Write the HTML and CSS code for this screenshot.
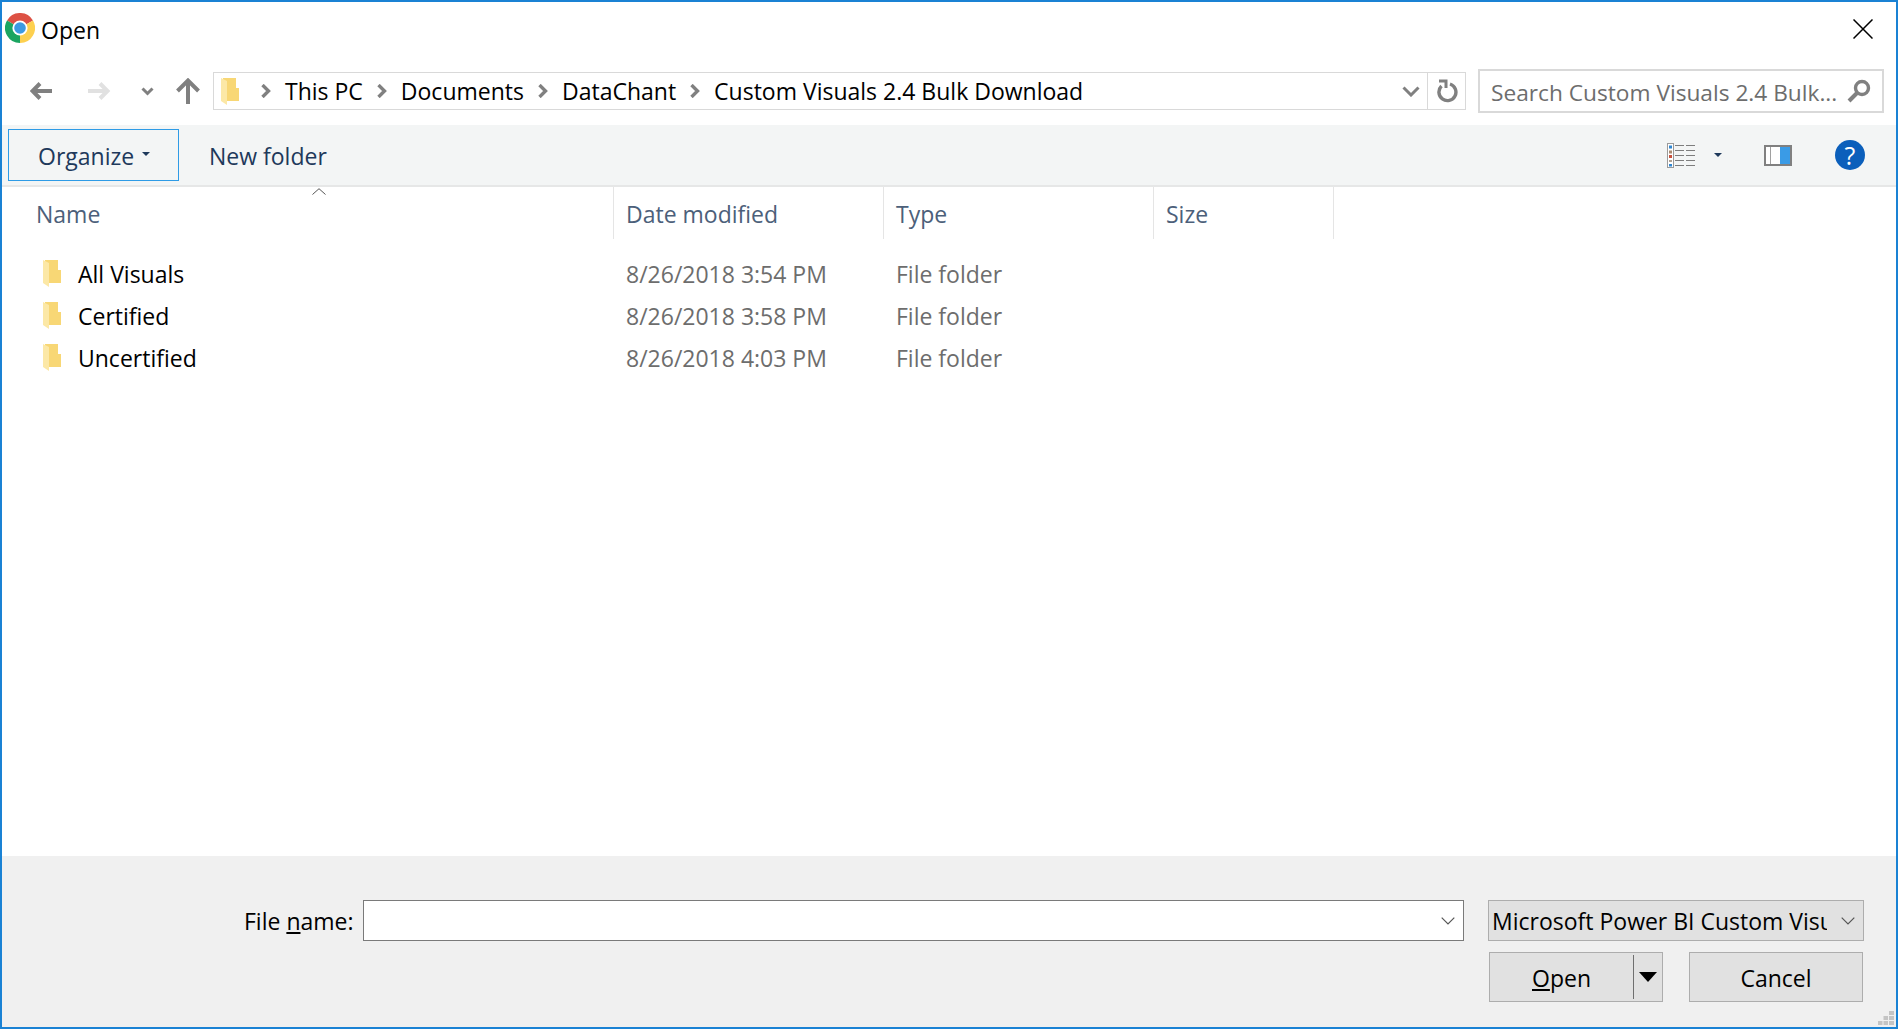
FILE: index.html
```html
<!DOCTYPE html>
<html lang="en">
<head>
    <meta charset="UTF-8">
    <title>Open</title>
    <link rel="stylesheet" href="styles.css">
</head>
<body>
    <div class="dialog">
        <div class="titlebar">
            <svg class="app-icon" width="30" height="30" viewBox="0 0 30 30">
                <path d="M15 15 L2 7.5 A15 15 0 0 1 28 7.5 Z" fill="#dd5144"/>
                <path d="M15 15 L28 7.5 A15 15 0 0 1 15 30 Z" fill="#fdd04f"/>
                <path d="M15 15 L15 30 A15 15 0 0 1 2 7.5 Z" fill="#1ba561"/>
                <circle cx="15" cy="15" r="7.6" fill="#fff"/>
                <circle cx="15" cy="15" r="5.8" fill="#3c9ae2"/>
            </svg>
            <span class="title">Open</span>
            <svg class="close" width="20" height="20" viewBox="0 0 20 20">
                <path d="M0.5 0.5 L19.5 19.5 M19.5 0.5 L0.5 19.5" stroke="#000" stroke-width="1.5" fill="none"/>
            </svg>
        </div>

        <div class="navbar">
            <div class="nav-buttons">
                <svg class="nav-back" width="23" height="18" viewBox="0 0 23 18">
                    <path d="M22 9 H3 M10 1.5 L2.5 9 L10 16.5" stroke="#808080" stroke-width="4" fill="none"/>
                </svg>
                <svg class="nav-forward" width="23" height="18" viewBox="0 0 23 18">
                    <path d="M0 9 H19 M12 1.5 L19.5 9 L12 16.5" stroke="#e1e1e1" stroke-width="4" fill="none"/>
                </svg>
                <svg class="nav-recent" width="13" height="9" viewBox="0 0 13 9">
                    <path d="M1.5 1.5 L6.5 6.5 L11.5 1.5" stroke="#808080" stroke-width="3" fill="none"/>
                </svg>
                <svg class="nav-up" width="24" height="26" viewBox="0 0 24 26">
                    <path d="M12 26 V3 M1.5 13 L12 2.5 L22.5 13" stroke="#808080" stroke-width="4" fill="none"/>
                </svg>
            </div>
            <div class="address">
                <svg class="crumb-folder" width="18" height="27" viewBox="0 0 18 27">
                    <path d="M2 0 H15 V10 H18 V23 H2 Z" fill="#f8d775"/>
                    <path d="M0 0 L6 3 V27 L0 23 Z" fill="#fce8a6"/>
                </svg>
                <svg class="crumb-sep crumb-sep-first" width="10" height="14" viewBox="0 0 10 14"><path d="M1.5 1 L7.500 7 L1.5 13" stroke="#808080" stroke-width="3.4" fill="none"/></svg>
                <span class="crumb">This PC</span>
                <svg class="crumb-sep" width="10" height="14" viewBox="0 0 10 14"><path d="M1.5 1 L7.500 7 L1.5 13" stroke="#808080" stroke-width="3.4" fill="none"/></svg>
                <span class="crumb">Documents</span>
                <svg class="crumb-sep" width="10" height="14" viewBox="0 0 10 14"><path d="M1.5 1 L7.500 7 L1.5 13" stroke="#808080" stroke-width="3.4" fill="none"/></svg>
                <span class="crumb">DataChant</span>
                <svg class="crumb-sep" width="10" height="14" viewBox="0 0 10 14"><path d="M1.5 1 L7.500 7 L1.5 13" stroke="#808080" stroke-width="3.4" fill="none"/></svg>
                <span class="crumb">Custom Visuals 2.4 Bulk Download</span>
                <svg class="address-drop" width="18" height="11" viewBox="0 0 18 11">
                    <path d="M1.5 1.5 L9 9 L16.5 1.5" stroke="#808080" stroke-width="3" fill="none"/>
                </svg>
                <div class="refresh">
                    <svg width="22" height="24" viewBox="0 0 22 24">
                        <path d="M14 5 A8.500 8.500 0 1 1 5.500 7" stroke="#808080" stroke-width="3.400" fill="none"/>
                        <path d="M3 2 L10 2 L10 9" stroke="#808080" stroke-width="3" fill="none"/>
                    </svg>
                </div>
            </div>
            <div class="search">
                <span class="search-text">Search Custom Visuals 2.4 Bulk...</span>
                <svg width="24" height="24" viewBox="0 0 24 24">
                    <circle cx="15" cy="9" r="6.5" stroke="#808080" stroke-width="3.4" fill="none"/>
                    <path d="M10 14 L2 22" stroke="#808080" stroke-width="4" fill="none"/>
                </svg>
            </div>
        </div>

        <div class="toolbar">
            <div class="organize">
                <span>Organize</span>
                <span class="caret"></span>
            </div>
            <span class="new-folder">New folder</span>
            <div class="tool-icons">
                <svg class="view-icon" width="28" height="25" viewBox="0 0 28 25">
                    <rect x="0.5" y="0.5" width="6" height="24" fill="#fff" stroke="#9a9a9a"/>
                    <rect x="2" y="2.5" width="3" height="3" fill="#2f86d0"/>
                    <rect x="2" y="7.5" width="3" height="3" fill="#a88a70"/>
                    <rect x="2" y="12" width="3" height="3" fill="#c8503c"/>
                    <rect x="2" y="17" width="3" height="2" fill="#b0a090"/>
                    <rect x="2" y="21" width="3" height="2.5" fill="#2f86d0"/>
                    <path d="M8 2.5 H17 M19 2.5 H28 M8 7.5 H17 M19 7.5 H28 M8 12.5 H17 M19 12.5 H28 M8 17.5 H17 M19 17.5 H28 M8 22.5 H17 M19 22.5 H28" stroke="#7d7d7d" stroke-width="1"/>
                </svg>
                <span class="caret view-caret"></span>
                <svg class="pane-icon" width="28" height="21" viewBox="0 0 28 21">
                    <rect x="1" y="1" width="26" height="19" fill="#fff" stroke="#808080" stroke-width="2"/>
                    <rect x="16" y="2" width="10" height="17" fill="#3a9be6"/>
                    <path d="M6.5 2 V19" stroke="#a0a0a0"/>
                </svg>
                <div class="help-icon">?</div>
            </div>
        </div>

        <div class="files">
            <svg class="sort-mark" width="14" height="7" viewBox="0 0 14 7">
                <path d="M0.5 6.5 L7 0.7 L13.5 6.5" stroke="#555" stroke-width="1" fill="none"/>
            </svg>
            <div class="head">
                <div class="head-cell head-name">Name</div>
                <div class="head-cell">Date modified</div>
                <div class="head-cell">Type</div>
                <div class="head-cell">Size</div>
            </div>
            <div class="rows">
                <div class="row">
                    <div class="cell-name">
                        <svg width="18" height="27" viewBox="0 0 18 27"><path d="M2 0 H15 V10 H18 V23 H2 Z" fill="#f8d775"/><path d="M0 0 L6 3 V27 L0 23 Z" fill="#fce8a6"/></svg>
                        <span>All Visuals</span>
                    </div>
                    <div class="cell-meta">8/26/2018 3:54 PM</div>
                    <div class="cell-meta">File folder</div>
                </div>
                <div class="row">
                    <div class="cell-name">
                        <svg width="18" height="27" viewBox="0 0 18 27"><path d="M2 0 H15 V10 H18 V23 H2 Z" fill="#f8d775"/><path d="M0 0 L6 3 V27 L0 23 Z" fill="#fce8a6"/></svg>
                        <span>Certified</span>
                    </div>
                    <div class="cell-meta">8/26/2018 3:58 PM</div>
                    <div class="cell-meta">File folder</div>
                </div>
                <div class="row">
                    <div class="cell-name">
                        <svg width="18" height="27" viewBox="0 0 18 27"><path d="M2 0 H15 V10 H18 V23 H2 Z" fill="#f8d775"/><path d="M0 0 L6 3 V27 L0 23 Z" fill="#fce8a6"/></svg>
                        <span>Uncertified</span>
                    </div>
                    <div class="cell-meta">8/26/2018 4:03 PM</div>
                    <div class="cell-meta">File folder</div>
                </div>
            </div>
        </div>

        <div class="footer">
            <div class="footer-row">
                <label class="file-label">File <u>n</u>ame:</label>
                <div class="file-input">
                    <svg width="14" height="8" viewBox="0 0 14 8"><path d="M0.7 0.7 L7 7 L13.3 0.7" stroke="#555" stroke-width="1.2" fill="none"/></svg>
                </div>
                <div class="file-type">
                    <span class="file-type-text">Microsoft Power BI Custom Visuals</span>
                    <svg width="14" height="8" viewBox="0 0 14 8"><path d="M0.7 0.7 L7 7 L13.3 0.7" stroke="#555" stroke-width="1.2" fill="none"/></svg>
                </div>
            </div>
            <div class="footer-actions">
                <div class="btn btn-open">
                    <span class="btn-open-label"><u>O</u>pen</span>
                    <span class="btn-split"></span>
                    <span class="btn-arrow"></span>
                </div>
                <div class="btn btn-cancel">Cancel</div>
            </div>
            <svg class="grip" width="16" height="14" viewBox="0 0 16 14">
                <path d="M11 0 H16 V4 H11 Z M5.500 5 H10 V9 H5.500 Z M11 5 H16 V9 H11 Z M0 10 H4.500 V14 H0 Z M5.500 10 H10 V14 H5.500 Z M11 10 H16 V14 H11 Z" fill="#c4c4c4"/>
            </svg>
        </div>
    </div>
</body>
</html>
```

FILE: styles.css
```css
html, body {
    margin: 0;
    padding: 0;
    height: 100%;
}
body {
    font-family: "Open Sans", "Noto Sans", sans-serif;
    font-size: 23px;
    color: #000;
    background: #fff;
    overflow: hidden;
}
svg {
    display: block;
    flex: none;
}
.dialog {
    display: flex;
    flex-direction: column;
    box-sizing: border-box;
    height: 1029px;
    border: 2px solid #1a82d4;
    background: #fff;
}

/* title bar */
.titlebar {
    display: flex;
    align-items: center;
    height: 55px;
    padding: 0 23px 3px 3px;
    box-sizing: border-box;
}
.title {
    margin-left: 6px;
    margin-top: 3px;
    flex: 1;
}
.close {
    margin-top: 2px;
}

/* nav row */
.navbar {
    display: flex;
    align-items: flex-start;
    height: 68px;
    padding-top: 15px;
    box-sizing: border-box;
}
.nav-buttons {
    display: flex;
    align-items: center;
    width: 211px;
    height: 38px;
    padding-left: 28px;
    box-sizing: border-box;
}
.nav-forward {
    margin-left: 35px;
}
.nav-recent {
    margin-left: 30px;
}
.nav-up {
    margin-left: 22px;
}
.address {
    display: flex;
    align-items: center;
    width: 1253px;
    height: 38px;
    box-sizing: border-box;
    border: 1px solid #d9d9d9;
    padding-left: 7px;
}
.crumb {
    white-space: nowrap;
}
.crumb-sep {
    margin: 0 14px 0 14px;
}
.crumb-sep-first {
    margin-left: 22px;
}
.address-drop {
    margin-left: auto;
    margin-right: 7px;
}
.refresh {
    display: flex;
    align-items: center;
    justify-content: center;
    width: 38px;
    height: 100%;
    border-left: 1px solid #d9d9d9;
    box-sizing: border-box;
}
.search {
    display: flex;
    align-items: center;
    justify-content: space-between;
    width: 406px;
    height: 44px;
    margin: -3px 0 0 12px;
    padding: 0 11px 0 11px;
    box-sizing: border-box;
    border: 2px solid #d9d9d9;
    color: #6d6d6d;
}
.search-text {
    font-size: 22.7px;
    margin-top: 2px;
    white-space: nowrap;
}

/* toolbar */
.toolbar {
    display: flex;
    align-items: center;
    height: 62px;
    padding: 0 31px 0 6px;
    box-sizing: border-box;
    background: #f3f5f5;
    border-bottom: 2px solid #e6e7e7;
    color: #1e395b;
}
.organize {
    display: flex;
    align-items: center;
    width: 171px;
    height: 52px;
    box-sizing: border-box;
    padding-left: 29px;
    padding-top: 2px;
    border: 1px solid #2e9be6;
}
.caret {
    width: 0;
    height: 0;
    margin-left: 8px;
    margin-bottom: 5px;
    border-left: 4px solid transparent;
    border-right: 4px solid transparent;
    border-top: 4px solid #1e395b;
}
.new-folder {
    margin-left: 30px;
    margin-top: 2px;
}
.tool-icons {
    display: flex;
    align-items: center;
    margin-left: auto;
}
.view-caret {
    margin: 0 0 0 19px;
}
.pane-icon {
    margin-left: 42px;
}
.help-icon {
    width: 30px;
    height: 30px;
    margin-left: 43px;
    border-radius: 50%;
    background: #0b5fbb;
    color: #fff;
    font-size: 25px;
    line-height: 30px;
    text-align: center;
}

/* file list */
.files {
    position: relative;
    flex: 1;
}
.sort-mark {
    position: absolute;
    left: 310px;
    top: 1px;
}
.head {
    display: grid;
    grid-template-columns: 612px 270px 270px 180px;
    width: max-content;
    height: 52px;
    color: #4c607a;
}
.head-cell {
    display: flex;
    align-items: center;
    padding-left: 12px;
    padding-top: 2px;
    border-right: 1px solid #e5e5e5;
    box-sizing: border-box;
}
.head-name {
    padding-left: 34px;
}
.rows {
    padding-top: 14px;
}
.row {
    display: grid;
    grid-template-columns: 612px 270px 270px;
    align-items: center;
    height: 42px;
}
.cell-name {
    display: flex;
    align-items: center;
    gap: 17px;
    padding-left: 41px;
}
.cell-name svg {
    margin-bottom: 2px;
}
.cell-meta {
    padding-left: 12px;
    color: #6d6d6d;
}

/* footer */
.footer {
    position: relative;
    height: 171px;
    box-sizing: border-box;
    padding-top: 44px;
    background: #f0f0f0;
}
.footer-row {
    display: flex;
    align-items: center;
    height: 41px;
    padding-left: 242px;
}
.file-label {
    width: 119px;
}
.file-input {
    display: flex;
    align-items: center;
    justify-content: flex-end;
    width: 1101px;
    height: 41px;
    box-sizing: border-box;
    border: 1px solid #7a7a7a;
    background: #fff;
    padding-right: 8px;
}
.file-type {
    display: flex;
    align-items: center;
    justify-content: space-between;
    width: 376px;
    height: 41px;
    margin-left: 24px;
    box-sizing: border-box;
    border: 1px solid #adadad;
    background: #e1e1e1;
    padding: 0 8px 0 3px;
}
.file-type-text {
    width: 335px;
    overflow: hidden;
    white-space: nowrap;
}
.footer-actions {
    display: flex;
    justify-content: flex-end;
    gap: 26px;
    margin-top: 11px;
    padding-right: 33px;
}
.btn {
    display: flex;
    align-items: center;
    justify-content: center;
    width: 174px;
    height: 50px;
    box-sizing: border-box;
    border: 1px solid #adadad;
    background: #e1e1e1;
}
.btn-cancel {
    padding-top: 2px;
}
.btn-open {
    justify-content: flex-start;
}
.btn-open-label {
    width: 143px;
    padding-top: 2px;
    text-align: center;
}
.btn-split {
    width: 1px;
    height: 44px;
    background: #6f6f6f;
}
.btn-arrow {
    width: 0;
    height: 0;
    margin-left: 5px;
    border-left: 9px solid transparent;
    border-right: 9px solid transparent;
    border-top: 10px solid #000;
}
.grip {
    position: absolute;
    right: 2px;
    bottom: 2px;
}
```
